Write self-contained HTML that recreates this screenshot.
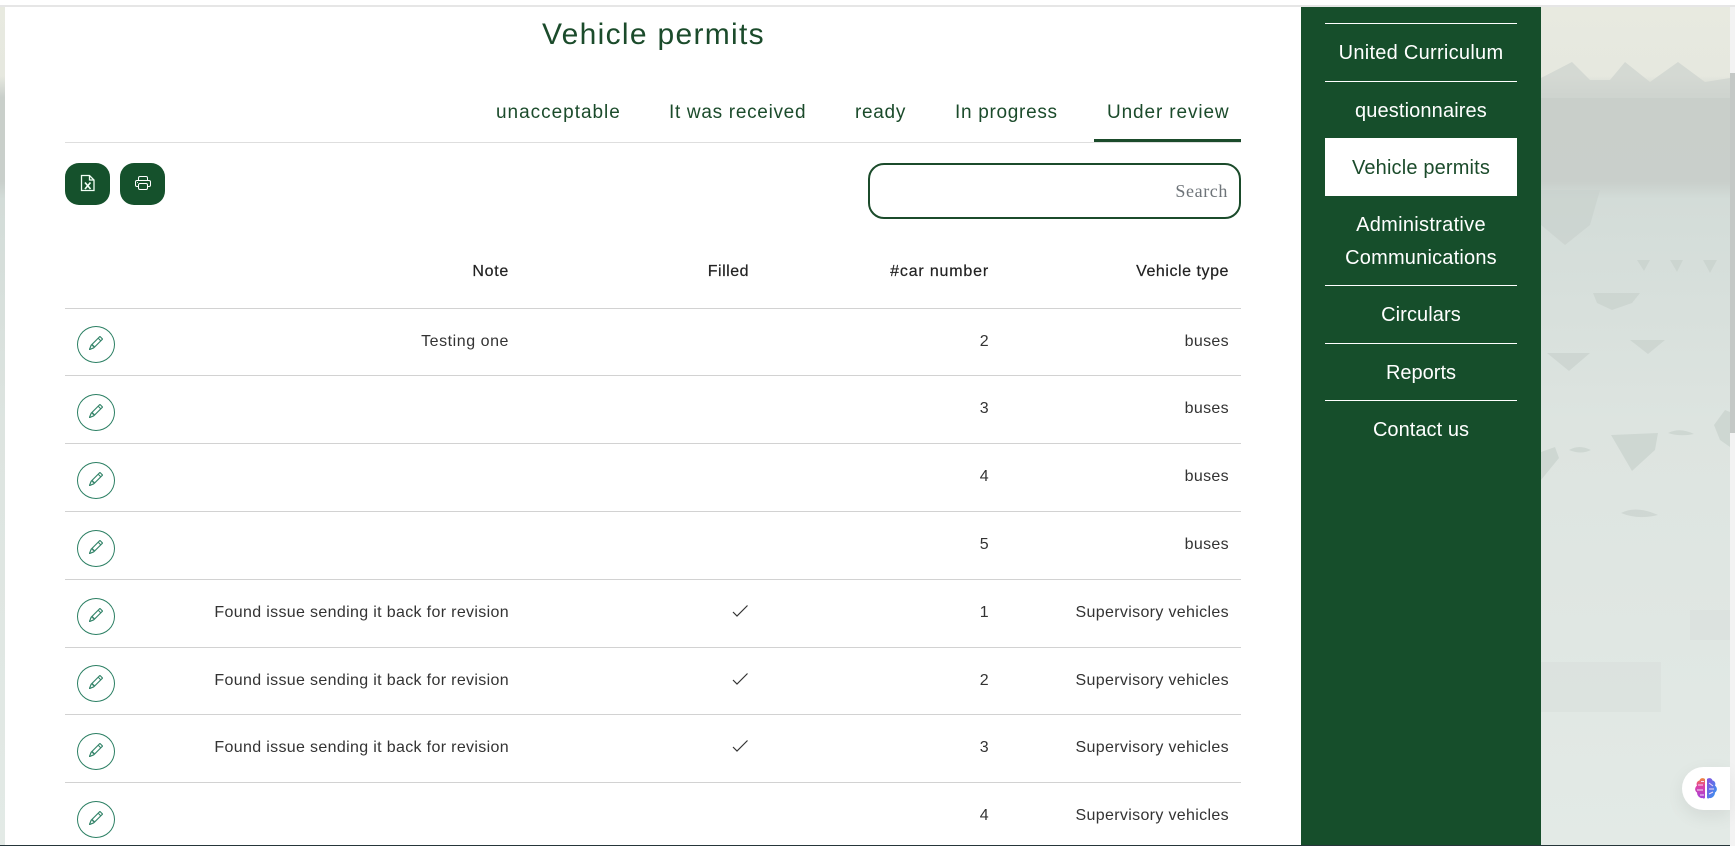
<!DOCTYPE html>
<html><head><meta charset="utf-8"><title>Vehicle permits</title>
<style>
html,body{margin:0;padding:0;width:1735px;height:846px;overflow:hidden;background:#fff;font-family:"Liberation Sans",sans-serif}
.a{position:absolute}
.t{position:absolute;white-space:nowrap;line-height:20px;height:20px}
.r{text-align:right}
.c{text-align:center}
.cell{font-size:16px;color:#333;letter-spacing:.34px}
.h{font-size:16px;color:#222;letter-spacing:.5px;-webkit-text-stroke:.2px #222}
.tab{font-size:19px;color:#1b4b2b;letter-spacing:.7px;top:103px}
.nav{position:absolute;left:1325px;width:192px;text-align:center;color:#fff;font-size:20px;line-height:33px;letter-spacing:.2px}
.ln{position:absolute;left:1325px;width:192px;height:1px;background:#fff}
.rl{position:absolute;left:65px;width:1176px;height:1px;background:#d2d2d2}
.ed{position:absolute;left:77px;width:36px;height:35px;border:1px solid #2b7f63;border-radius:50%}
.ed svg{position:absolute;left:11px;top:9px}
.btn{position:absolute;top:163px;width:45px;height:42px;background:#15512c;border-radius:14px}
</style></head>
<body>
<svg class="a" style="left:0;top:0" width="1735" height="846" viewBox="0 0 1735 846">
<defs>
<linearGradient id="g" x1="0" y1="0" x2="0" y2="1">
<stop offset="0" stop-color="#e8eae0"/><stop offset=".09" stop-color="#e6e8df"/><stop offset=".115" stop-color="#c9cfca"/><stop offset=".215" stop-color="#c9cfcb"/><stop offset=".235" stop-color="#d3dcd8"/><stop offset=".5" stop-color="#dde4e0"/><stop offset="1" stop-color="#e3eae6"/>
</linearGradient>
</defs>
<rect width="1735" height="846" fill="url(#g)"/>
<path d="M1541 78 1572 62 1590 80 1610 80 1625 62 1650 82 1678 62 1705 82 1730 78V98H1541Z" fill="#d0d5cf" opacity=".8"/>
<g fill="#c9d2cd" opacity=".7">
<path d="M1541 190H1600L1590 225 1565 245 1541 225Z"/>
<path d="M1637 260h13l-6 11ZM1670 260h13l-6 12ZM1703 260h14l-7 13Z"/>
<path d="M1593 293h47l-8 10-20 7-15-7Z"/>
<path d="M1547 353h43l-21 18ZM1630 340h35l-17 14Z"/>
<path d="M1611 435 1658 433 1655 450 1632 471ZM1541 452 1555 447 1559 458 1541 480ZM1714 425 1725 410 1730 412V447L1720 440Z"/>
<path d="M1569 450q10-6 22 0q-10 5-22 0zM1668 433q12-6 26 1q-14 3-26-1zM1621 513q15-8 37 2q-20 5-37-2z"/>
</g>
<rect x="1541" y="662" width="120" height="50" fill="#d8e0dc" opacity=".6"/>
<rect x="1690" y="610" width="40" height="30" fill="#d8e0dc" opacity=".6"/>
</svg>

<div class="a" style="left:5px;top:7px;width:1296px;height:839px;background:#fff"></div>
<div class="a" style="left:0;top:0;width:1735px;height:5px;background:#fff"></div>
<div class="a" style="left:0;top:5px;width:1735px;height:2px;background:#e6e6e6"></div>
<div class="a" style="left:0;top:845px;width:1735px;height:1px;background:#26363a"></div>

<div class="a" style="left:1730px;top:7px;width:5px;height:839px;background:#f3f3f3"></div>
<div class="a" style="left:1730px;top:73px;width:5px;height:360px;background:#c4c8c6"></div>

<div class="t" style="left:542px;top:20px;height:30px;line-height:30px;font-size:30px;color:#1b4b2b;letter-spacing:1.3px">Vehicle permits</div>

<div class="t tab" style="left:496px;letter-spacing:.98px">unacceptable</div>
<div class="t tab" style="left:669px">It was received</div>
<div class="t tab" style="left:855px">ready</div>
<div class="t tab" style="left:955px">In progress</div>
<div class="t tab" style="left:1107px;letter-spacing:.88px">Under review</div>
<div class="a" style="left:65px;top:142px;width:1176px;height:1px;background:#dedede"></div>
<div class="a" style="left:1094px;top:139px;width:147px;height:3px;background:#1b4b2b"></div>

<div class="btn" style="left:65px"><svg class="a" style="left:14px;top:10px" width="18" height="20" viewBox="0 0 18 20" fill="none" stroke="#f2fff6" stroke-width="1.3"><path d="M2.5 2.5H10.5L15 7V17.5H2.5Z"/><path d="M10.5 2.5V7H15"/><path d="M6 9.5 11.5 16M11.5 9.5 6 16" stroke-width="1.7"/></svg></div>
<div class="btn" style="left:120px"><svg class="a" style="left:15px;top:12px" width="16" height="16" viewBox="0 0 16 16" fill="#fff"><path d="M2.5 8a.5.5 0 1 0 0-1 .5.5 0 0 0 0 1z"/><path d="M5 1a2 2 0 0 0-2 2v2H2a2 2 0 0 0-2 2v3a2 2 0 0 0 2 2h1v1a2 2 0 0 0 2 2h6a2 2 0 0 0 2-2v-1h1a2 2 0 0 0 2-2V7a2 2 0 0 0-2-2h-1V3a2 2 0 0 0-2-2H5zM4 3a1 1 0 0 1 1-1h6a1 1 0 0 1 1 1v2H4V3zm1 5a2 2 0 0 0-2 2v1H2a1 1 0 0 1-1-1V7a1 1 0 0 1 1-1h12a1 1 0 0 1 1 1v3a1 1 0 0 1-1 1h-1v-1a2 2 0 0 0-2-2H5zm7 2v3a1 1 0 0 1-1 1H5a1 1 0 0 1-1-1v-3a1 1 0 0 1 1-1h6a1 1 0 0 1 1 1z"/></svg></div>

<div class="a" style="left:868px;top:163px;width:369px;height:52px;border:2px solid #1b4b2b;border-radius:16px;background:#fff"></div>
<div class="t r" style="right:507px;top:181px;font-family:'Liberation Serif',serif;font-size:18px;color:#6e7479;letter-spacing:.6px">Search</div>

<div class="t h r" style="right:1226px;top:262px;letter-spacing:.7px">Note</div>
<div class="t h r" style="right:986px;top:262px">Filled</div>
<div class="t h r" style="right:746px;top:262px;letter-spacing:.82px">#car number</div>
<div class="t h r" style="right:506px;top:262px;letter-spacing:.55px">Vehicle type</div>
<div class="rl" style="top:308px"></div>

<div class="t cell r" style="right:1226px;top:332px;letter-spacing:.55px">Testing one</div>
<div class="t cell r" style="right:746px;top:332px">2</div>
<div class="t cell r" style="right:506px;top:332px">buses</div>
<div class="ed" style="top:326px"><svg width="14" height="14" viewBox="0 0 16 16" fill="#2b7f63" stroke="#2b7f63" stroke-width=".35"><use href="#p"/></svg></div>
<div class="rl" style="top:375px"></div>

<div class="t cell r" style="right:746px;top:399px">3</div>
<div class="t cell r" style="right:506px;top:399px">buses</div>
<div class="ed" style="top:394px"><svg width="14" height="14" viewBox="0 0 16 16" fill="#2b7f63" stroke="#2b7f63" stroke-width=".35"><use href="#p"/></svg></div>
<div class="rl" style="top:443px"></div>

<div class="t cell r" style="right:746px;top:467px">4</div>
<div class="t cell r" style="right:506px;top:467px">buses</div>
<div class="ed" style="top:462px"><svg width="14" height="14" viewBox="0 0 16 16" fill="#2b7f63" stroke="#2b7f63" stroke-width=".35"><use href="#p"/></svg></div>
<div class="rl" style="top:511px"></div>

<div class="t cell r" style="right:746px;top:535px">5</div>
<div class="t cell r" style="right:506px;top:535px">buses</div>
<div class="ed" style="top:530px"><svg width="14" height="14" viewBox="0 0 16 16" fill="#2b7f63" stroke="#2b7f63" stroke-width=".35"><use href="#p"/></svg></div>
<div class="rl" style="top:579px"></div>

<div class="t cell r" style="right:1226px;top:603px">Found issue sending it back for revision</div>
<div class="t cell r" style="right:746px;top:603px">1</div>
<div class="t cell r" style="right:506px;top:603px">Supervisory vehicles</div>
<div class="ed" style="top:598px"><svg width="14" height="14" viewBox="0 0 16 16" fill="#2b7f63" stroke="#2b7f63" stroke-width=".35"><use href="#p"/></svg></div>
<svg class="a" style="left:730px;top:603px" width="20" height="15" fill="none" stroke="#333" stroke-width="1.2"><path d="M3 9 7 13 17.500 2.500"/></svg>
<div class="rl" style="top:647px"></div>

<div class="t cell r" style="right:1226px;top:671px">Found issue sending it back for revision</div>
<div class="t cell r" style="right:746px;top:671px">2</div>
<div class="t cell r" style="right:506px;top:671px">Supervisory vehicles</div>
<div class="ed" style="top:665px"><svg width="14" height="14" viewBox="0 0 16 16" fill="#2b7f63" stroke="#2b7f63" stroke-width=".35"><use href="#p"/></svg></div>
<svg class="a" style="left:730px;top:671px" width="20" height="15" fill="none" stroke="#333" stroke-width="1.2"><path d="M3 9 7 13 17.500 2.500"/></svg>
<div class="rl" style="top:714px"></div>

<div class="t cell r" style="right:1226px;top:738px">Found issue sending it back for revision</div>
<div class="t cell r" style="right:746px;top:738px">3</div>
<div class="t cell r" style="right:506px;top:738px">Supervisory vehicles</div>
<div class="ed" style="top:733px"><svg width="14" height="14" viewBox="0 0 16 16" fill="#2b7f63" stroke="#2b7f63" stroke-width=".35"><use href="#p"/></svg></div>
<svg class="a" style="left:730px;top:738px" width="20" height="15" fill="none" stroke="#333" stroke-width="1.2"><path d="M3 9 7 13 17.500 2.500"/></svg>
<div class="rl" style="top:782px"></div>

<div class="t cell r" style="right:746px;top:806px">4</div>
<div class="t cell r" style="right:506px;top:806px">Supervisory vehicles</div>
<div class="ed" style="top:801px"><svg width="14" height="14" viewBox="0 0 16 16" fill="#2b7f63" stroke="#2b7f63" stroke-width=".35"><use href="#p"/></svg></div>

<div class="a" style="left:1301px;top:7px;width:240px;height:838px;background:#164e2b"></div>
<div class="ln" style="top:23px"></div>
<div class="nav" style="top:37px;letter-spacing:.28px">United Curriculum</div>
<div class="ln" style="top:81px"></div>
<div class="nav" style="top:95px;letter-spacing:.13px">questionnaires</div>
<div class="a" style="left:1325px;top:138px;width:192px;height:58px;background:#fff"></div>
<div class="nav" style="top:152px;color:#1b4b2b;letter-spacing:.16px">Vehicle permits</div>
<div class="nav" style="top:209px;letter-spacing:.3px">Administrative<br><span style="letter-spacing:.2px">Communications</span></div>
<div class="ln" style="top:285px"></div>
<div class="nav" style="top:299px;letter-spacing:.1px">Circulars</div>
<div class="ln" style="top:343px"></div>
<div class="nav" style="top:357px;letter-spacing:0">Reports</div>
<div class="ln" style="top:400px"></div>
<div class="nav" style="top:414px;letter-spacing:.05px">Contact us</div>

<div class="a" style="left:1682px;top:767px;width:48px;height:43px;background:#fff;border-radius:22px 0 0 22px;box-shadow:0 6px 18px rgba(0,0,0,.07)"></div>
<svg class="a" style="left:1694px;top:777px" width="24" height="23" viewBox="0 0 24 23">
<defs>
<linearGradient id="bl" x1="0" y1="0" x2="0" y2="1"><stop offset="0" stop-color="#f08a3c"/><stop offset=".35" stop-color="#e2409f"/><stop offset="1" stop-color="#a143dc"/></linearGradient>
<linearGradient id="br" x1="0" y1="0" x2="1" y2="1"><stop offset="0" stop-color="#8a4fe0"/><stop offset="1" stop-color="#2f9bf0"/></linearGradient>
</defs>
<path d="M11 2C9 .5 6 1 5.500 3.500 3 4 2 6.500 3 8.500 .5 10.500 .5 14 3 15.500 3 19 6 21.500 8.500 21 9.500 22 11 21.500 11 20.500Z" fill="url(#bl)"/>
<path d="M13 2C15 .5 18 1 18.500 3.500 21 4 22 6.500 21 8.500 23.500 10.500 23.500 14 21 15.500 21 19 18 21.500 15.500 21 14.500 22 13 21.500 13 20.500Z" fill="url(#br)"/>
<g fill="none" stroke="#f3dff8" stroke-width="1"><path d="M4 8H9M3 13H9M6 18H10M7 4.500H10M15 6 19 9M15 12H20M15 17 19 15"/></g>
</svg>

<svg width="0" height="0" style="position:absolute"><defs><g id="p"><path d="M12.146.146a.5.5 0 0 1 .708 0l3 3a.5.5 0 0 1 0 .708l-10 10a.5.5 0 0 1-.168.11l-5 2a.5.5 0 0 1-.65-.65l2-5a.5.5 0 0 1 .11-.168l10-10zM11.207 2.500 13.500 4.793 14.793 3.500 12.500 1.207 11.207 2.500zm1.586 3L10.500 3.207 4 9.707V10h.5a.5.5 0 0 1 .5.5v.5h.5a.5.5 0 0 1 .5.5v.5h.293l6.500-6.500zm-9.761 5.175-.106.106-1.528 3.821 3.821-1.528.106-.106A.5.5 0 0 1 5 12.500V12h-.5a.5.5 0 0 1-.5-.5V11h-.5a.5.5 0 0 1-.468-.325z"/></g></defs></svg>
</body></html>
